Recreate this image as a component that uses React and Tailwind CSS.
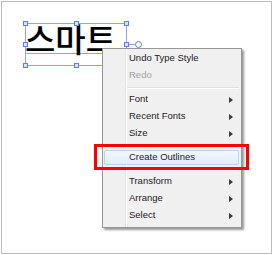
import React from "react";

const Arrow = () => (
  <svg width="4" height="6" viewBox="0 0 4 6" className="block">
    <path d="M0 0 L4 3 L0 6 Z" fill="#3a3a3a" />
  </svg>
);

const Row = ({ label, disabled, sub }) => (
  <div className="relative flex h-[17px] items-center justify-between pl-[26px] pr-[8px]">
    <span className={disabled ? "text-[#a3a3a3]" : "text-[#1f1a28]"}>{label}</span>
    {sub && <Arrow />}
  </div>
);

const Sep = () => (
  <div className="relative flex h-[7px] flex-col justify-center pl-[24px] pr-[2px]">
    <div className="h-px bg-[#e0e0e0]" />
    <div className="h-px bg-white" />
  </div>
);

const Handle = () => <div className="h-[5px] w-[5px] border border-[#5b7fe8] bg-[#dbe4ff]" />;

export default function App() {
  return (
    <div className="h-[255px] w-[274px] bg-white pl-px pt-px">
      <div className="relative h-[253px] w-[271px] border border-[#bdbdbd] bg-white">
        {/* text object on the artboard */}
        <div className="absolute left-[23px] top-[21px] h-[43px] w-[102px] border border-[#8aa4f0]">
          <div className="mt-[29px] h-px w-full bg-[#8aa4f0]" />
          <div
            className="absolute left-[-1px] top-[-2px] whitespace-nowrap text-[33px] font-medium leading-none text-black"
            style={{ fontFamily: '"Noto Sans CJK KR", sans-serif' }}
          >
            스마트
          </div>
          <div className="absolute inset-[-3px] flex flex-col justify-between">
            <div className="flex justify-between">
              <Handle />
              <Handle />
              <Handle />
            </div>
            <div className="flex items-center justify-between">
              <Handle />
              <div className="flex items-center">
                <Handle />
                <div className="h-px w-[6px] bg-[#8aa4f0]" />
                <div className="h-[7px] w-[7px] -mr-[13px] rounded-full border border-[#5b7fe8] bg-white" />
              </div>
            </div>
            <div className="flex justify-between">
              <Handle />
              <Handle />
              <Handle />
            </div>
          </div>
        </div>

        {/* context menu */}
        <div
          className="absolute left-[100px] top-[46px] w-[140px] border border-[#979797] bg-[#f0f0f0] pb-[3px] pt-px text-[9.5px] shadow-[2px_2px_2px_rgba(0,0,0,0.4)]"
          style={{ fontFamily: '"Liberation Sans", Arial, sans-serif' }}
        >
          <div className="absolute bottom-0 left-[22px] top-0 w-px bg-[#e2e3e3]" />
          <div className="absolute bottom-0 left-[23px] top-0 w-px bg-white" />
          <Row label="Undo Type Style" />
          <Row label="Redo" disabled />
          <Sep />
          <Row label="Font" sub />
          <Row label="Recent Fonts" sub />
          <Row label="Size" sub />
          <Sep />
          <div className="relative flex h-[17px] items-center py-px pl-px pr-[2px]">
            <div className="flex h-[15px] w-full items-center rounded-[2px] border border-[#b8d3f3] bg-gradient-to-b from-[#f2f7fd] to-[#e3edfa] pl-[24px]">
              <span className="text-[#1f1a28]">Create Outlines</span>
            </div>
          </div>
          <Sep />
          <Row label="Transform" sub />
          <Row label="Arrange" sub />
          <Row label="Select" sub />
        </div>

        {/* red highlight */}
        <div className="absolute left-[92px] top-[142px] h-[26px] w-[155px] border-[3px] border-[#ff0000]" />
      </div>
    </div>
  );
}
